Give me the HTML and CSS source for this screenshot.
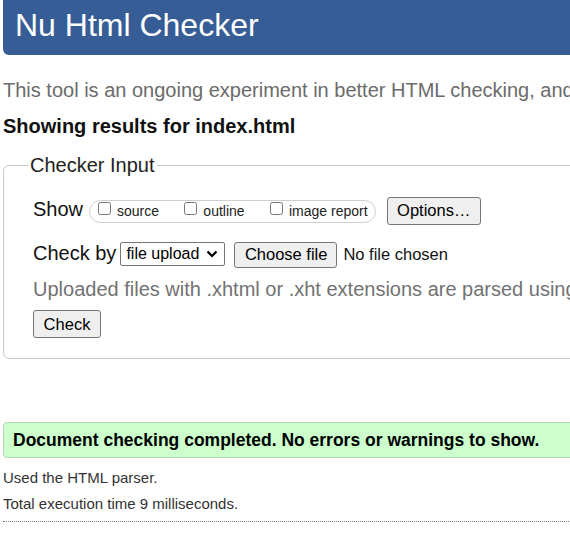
FILE: index.html
```html
<!DOCTYPE html>
<html lang="en">
<head>
<meta charset="utf-8">
<title>Nu Html Checker</title>
<link rel="stylesheet" href="styles.css">
</head>
<body>
<div class="page">
  <h1 class="title">Nu Html Checker</h1>
  <p class="intro">This tool is an ongoing experiment in better HTML checking, and its behavior remains subject to change</p>
  <p class="showing">Showing results for index.html</p>
  <form class="checker">
    <fieldset class="fs">
      <legend class="legend">Checker Input</legend>
      <div class="inner">
        <div class="row row-show"><span class="lbl">Show</span><span class="pill"><label class="opt"><input type="checkbox" class="cb"> source</label><label class="opt"><input type="checkbox" class="cb"> outline</label><label class="opt last"><input type="checkbox" class="cb"> image report</label></span><button type="button" class="btn btn-options">Options…</button></div>
        <div class="row row-check"><span class="lbl">Check by</span><span class="select">file upload<svg class="chev" width="12" height="8" viewBox="0 0 12 8"><path d="M1.5 1.5 L6 6 L10.5 1.5" fill="none" stroke="#000" stroke-width="2.2"/></svg></span><button type="button" class="btn btn-file">Choose file</button><span class="nofile">No file chosen</span></div>
        <p class="note">Uploaded files with .xhtml or .xht extensions are parsed using the XML parser.</p>
        <div class="submit"><button type="button" class="btn btn-check">Check</button></div>
      </div>
    </fieldset>
  </form>
  <p class="success">Document checking completed. No errors or warnings to show.</p>
  <p class="meta">Used the HTML parser.</p>
  <p class="meta">Total execution time 9 milliseconds.</p>
  <hr class="dots">
</div>
</body>
</html>
```
FILE: styles.css
```css
html, body {
  margin: 0;
  padding: 0;
  overflow: hidden;
  background: #fff;
}
body {
  font-family: "Liberation Sans", Arial, sans-serif;
  color: #000;
}
.page {
  width: 900px;
  padding-left: 3px;
}
.title {
  margin: 0;
  height: 50px;
  padding: 0 12px 5px;
  line-height: 50px;
  font-size: 32px;
  font-weight: normal;
  color: #fff;
  background: #365d95;
  border-radius: 0 0 0 6px;
}
.intro {
  margin: 23px 0 0;
  font-size: 20px;
  line-height: 24px;
  color: #6b6b6b;
  white-space: nowrap;
}
.showing {
  margin: 12px 0 0;
  font-size: 20px;
  line-height: 24px;
  font-weight: bold;
  color: #111;
}
.checker {
  margin: 15px 0 0;
}
.fs {
  margin: 0;
  padding: 0 0 20px 24px;
  border: 1px solid #c8c8c8;
  border-radius: 6px;
}
.legend {
  padding: 0 2px;
  font-size: 20px;
  line-height: 24px;
  color: #222;
}
.inner {
  padding: 16px 0 0 5px;
}
.row {
  font-size: 20px;
  line-height: 32px;
  white-space: nowrap;
  color: #111;
}
.row-check {
  margin-top: 12px;
}
.pill {
  display: inline-block;
  margin-left: 6px;
  padding: 0 7px 0 4px;
  border: 1px solid #cfcfcf;
  border-radius: 12px;
  font-size: 14px;
  line-height: 21px;
  color: #222;
}
.opt {
  margin-right: 21.5px;
}
.opt.last {
  margin-right: 0;
}
.cb {
  width: 13px;
  height: 13px;
  margin: 0 2px 0 4px;
  vertical-align: 1px;
}
.btn {
  display: inline-block;
  box-sizing: border-box;
  height: 28px;
  padding: 0 9.5px;
  border: 1px solid #767676;
  border-radius: 3px;
  background: #efefef;
  font-family: "Liberation Sans", Arial, sans-serif;
  font-size: 16.5px;
  color: #000;
  vertical-align: baseline;
}
.btn-options {
  margin-left: 11px;
  width: 94px;
}
.select {
  display: inline-flex;
  align-items: center;
  box-sizing: border-box;
  width: 105px;
  height: 24px;
  margin-left: 4px;
  padding: 0 6px 0 5px;
  border: 1px solid #767676;
  border-radius: 2px;
  font-size: 16px;
  line-height: 22px;
  color: #000;
  vertical-align: 1px;
}
.chev {
  margin-left: auto;
}
.btn-file {
  height: 26px;
  width: 103px;
  margin-left: 9px;
}
.nofile {
  margin-left: 6px;
  font-size: 16.5px;
  color: #111;
}
.note {
  margin: 7px 0 0;
  font-size: 20px;
  line-height: 24px;
  color: #727272;
  white-space: nowrap;
}
.submit {
  display: flex;
  margin-top: 9px;
}
.btn-check {
  width: 68px;
}
.success {
  margin: 63px 0 0;
  height: 34px;
  padding-left: 9px;
  border: 1px solid #b9d3b9;
  border-radius: 4px 0 0 4px;
  background: #ccffcc;
  font-size: 17.5px;
  line-height: 34px;
  font-weight: bold;
  color: #000;
}
.meta {
  margin: 0;
  font-size: 15px;
  line-height: 26px;
  color: #333;
}
.success + .meta {
  margin-top: 7px;
}
.dots {
  margin: 4px 0 0;
  height: 0;
  border: 0;
  border-top: 1px dotted #777;
}
```
